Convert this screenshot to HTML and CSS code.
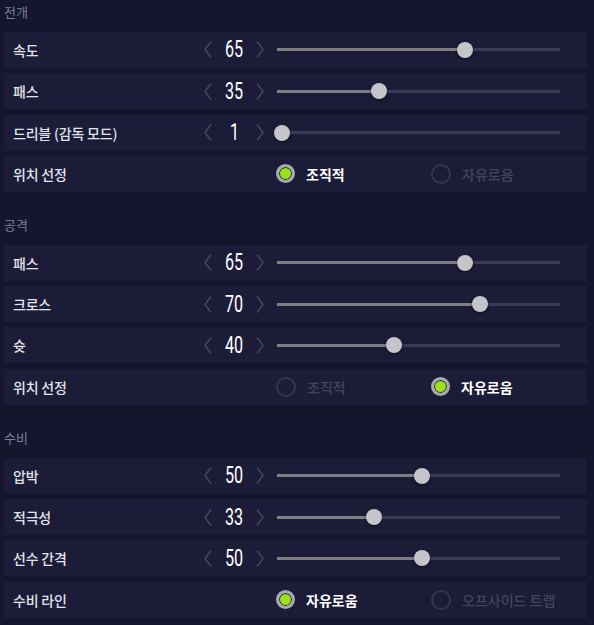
FILE: index.html
```html
<!DOCTYPE html>
<html>
<head>
    <title>전술 설정</title>
    <meta charset="UTF-8">
    <link rel="stylesheet" href="styles.css">
</head>
<body>
    <div class="tactics">
        <div class="section">
            <div class="section-title">전개</div>
            <div class="row">
                <div class="label">속도</div>
                <div class="stepper">
                    <svg class="chev" viewBox="0 0 10 18"><path d="M8 1 L2 9 L8 17"/></svg>
                    <span class="value">65</span>
                    <svg class="chev" viewBox="0 0 10 18"><path d="M2 1 L8 9 L2 17"/></svg>
                </div>
                <div class="slider" style="--v: 65"><div class="fill"></div><div class="thumb"></div></div>
            </div>
            <div class="row">
                <div class="label">패스</div>
                <div class="stepper">
                    <svg class="chev" viewBox="0 0 10 18"><path d="M8 1 L2 9 L8 17"/></svg>
                    <span class="value">35</span>
                    <svg class="chev" viewBox="0 0 10 18"><path d="M2 1 L8 9 L2 17"/></svg>
                </div>
                <div class="slider" style="--v: 35"><div class="fill"></div><div class="thumb"></div></div>
            </div>
            <div class="row">
                <div class="label">드리블 (감독 모드)</div>
                <div class="stepper">
                    <svg class="chev" viewBox="0 0 10 18"><path d="M8 1 L2 9 L8 17"/></svg>
                    <span class="value">1</span>
                    <svg class="chev" viewBox="0 0 10 18"><path d="M2 1 L8 9 L2 17"/></svg>
                </div>
                <div class="slider" style="--v: 1"><div class="fill"></div><div class="thumb"></div></div>
            </div>
            <div class="row">
                <div class="label">위치 선정</div>
                <div class="options">
                    <div class="option selected"><span class="radio"></span>조직적</div>
                    <div class="option"><span class="radio"></span>자유로움</div>
                </div>
            </div>
        </div>

        <div class="section">
            <div class="section-title">공격</div>
            <div class="row">
                <div class="label">패스</div>
                <div class="stepper">
                    <svg class="chev" viewBox="0 0 10 18"><path d="M8 1 L2 9 L8 17"/></svg>
                    <span class="value">65</span>
                    <svg class="chev" viewBox="0 0 10 18"><path d="M2 1 L8 9 L2 17"/></svg>
                </div>
                <div class="slider" style="--v: 65"><div class="fill"></div><div class="thumb"></div></div>
            </div>
            <div class="row">
                <div class="label">크로스</div>
                <div class="stepper">
                    <svg class="chev" viewBox="0 0 10 18"><path d="M8 1 L2 9 L8 17"/></svg>
                    <span class="value">70</span>
                    <svg class="chev" viewBox="0 0 10 18"><path d="M2 1 L8 9 L2 17"/></svg>
                </div>
                <div class="slider" style="--v: 70"><div class="fill"></div><div class="thumb"></div></div>
            </div>
            <div class="row">
                <div class="label">슛</div>
                <div class="stepper">
                    <svg class="chev" viewBox="0 0 10 18"><path d="M8 1 L2 9 L8 17"/></svg>
                    <span class="value">40</span>
                    <svg class="chev" viewBox="0 0 10 18"><path d="M2 1 L8 9 L2 17"/></svg>
                </div>
                <div class="slider" style="--v: 40"><div class="fill"></div><div class="thumb"></div></div>
            </div>
            <div class="row">
                <div class="label">위치 선정</div>
                <div class="options">
                    <div class="option"><span class="radio"></span>조직적</div>
                    <div class="option selected"><span class="radio"></span>자유로움</div>
                </div>
            </div>
        </div>

        <div class="section">
            <div class="section-title">수비</div>
            <div class="row">
                <div class="label">압박</div>
                <div class="stepper">
                    <svg class="chev" viewBox="0 0 10 18"><path d="M8 1 L2 9 L8 17"/></svg>
                    <span class="value">50</span>
                    <svg class="chev" viewBox="0 0 10 18"><path d="M2 1 L8 9 L2 17"/></svg>
                </div>
                <div class="slider" style="--v: 50"><div class="fill"></div><div class="thumb"></div></div>
            </div>
            <div class="row">
                <div class="label">적극성</div>
                <div class="stepper">
                    <svg class="chev" viewBox="0 0 10 18"><path d="M8 1 L2 9 L8 17"/></svg>
                    <span class="value">33</span>
                    <svg class="chev" viewBox="0 0 10 18"><path d="M2 1 L8 9 L2 17"/></svg>
                </div>
                <div class="slider" style="--v: 33"><div class="fill"></div><div class="thumb"></div></div>
            </div>
            <div class="row">
                <div class="label">선수 간격</div>
                <div class="stepper">
                    <svg class="chev" viewBox="0 0 10 18"><path d="M8 1 L2 9 L8 17"/></svg>
                    <span class="value">50</span>
                    <svg class="chev" viewBox="0 0 10 18"><path d="M2 1 L8 9 L2 17"/></svg>
                </div>
                <div class="slider" style="--v: 50"><div class="fill"></div><div class="thumb"></div></div>
            </div>
            <div class="row">
                <div class="label">수비 라인</div>
                <div class="options">
                    <div class="option selected"><span class="radio"></span>자유로움</div>
                    <div class="option"><span class="radio"></span>오프사이드 트랩</div>
                </div>
            </div>
        </div>
    </div>
</body>
</html>
```

FILE: styles.css
```css
body {
    margin: 0;
    background: #15152d;
    font-family: 'Noto Sans CJK KR', 'Noto Sans', sans-serif;
    color: #e2e2ea;
}

.tactics {
    padding: 0 7px 0 4px;
}

.section {
    display: flex;
    flex-direction: column;
    gap: 5.3px;
}

.section + .section {
    margin-top: 21px;
}

.section-title {
    height: 24px;
    line-height: 24px;
    font-size: 13px;
    color: #7c7c92;
    margin-bottom: 2.7px;
}

.row {
    height: 36px;
    display: flex;
    align-items: center;
    background: #1c1c38;
    padding-left: 9px;
}

.label {
    width: 190px;
    font-size: 14px;
    font-weight: 500;
    letter-spacing: -0.2px;
}

.stepper {
    width: 62px;
    display: flex;
    align-items: center;
    justify-content: space-between;
    margin-right: 12px;
}

.chev {
    width: 10px;
    height: 19px;
    fill: none;
    stroke: #44445f;
    stroke-width: 1.6;
}

.value {
    font-family: Roboto, 'DejaVu Sans', sans-serif;
    font-size: 23px;
    line-height: 1;
    color: #ffffff;
    transform: scaleX(0.7);
}

.slider {
    position: relative;
    width: 283px;
    height: 3px;
    background: #3a3a58;
}

.fill {
    height: 100%;
    width: calc(2px + var(--v) * 2.867px);
    background: #7e7e84;
}

.thumb {
    position: absolute;
    top: 50%;
    left: calc(2px + var(--v) * 2.867px);
    width: 16px;
    height: 16px;
    border-radius: 50%;
    background: #c4c4ca;
    transform: translate(-50%, -50%);
    box-shadow: 0 1px 3px rgba(0, 0, 0, 0.6);
}

.options {
    display: flex;
    margin-left: 73px;
}

.option {
    width: 155px;
    display: flex;
    align-items: center;
    gap: 11px;
    font-size: 14px;
    font-weight: 500;
    color: #44445c;
}

.option.selected {
    color: #ffffff;
    font-weight: 700;
}

.radio {
    width: 16px;
    height: 16px;
    border-radius: 50%;
    border: 2px solid #34344e;
    box-sizing: content-box;
}

.option.selected .radio {
    width: 13px;
    height: 13px;
    border: 3px solid #a9a9b2;
    background: #9be21c;
    box-shadow: inset 0 0 0 1px #1c1c38;
}
```
